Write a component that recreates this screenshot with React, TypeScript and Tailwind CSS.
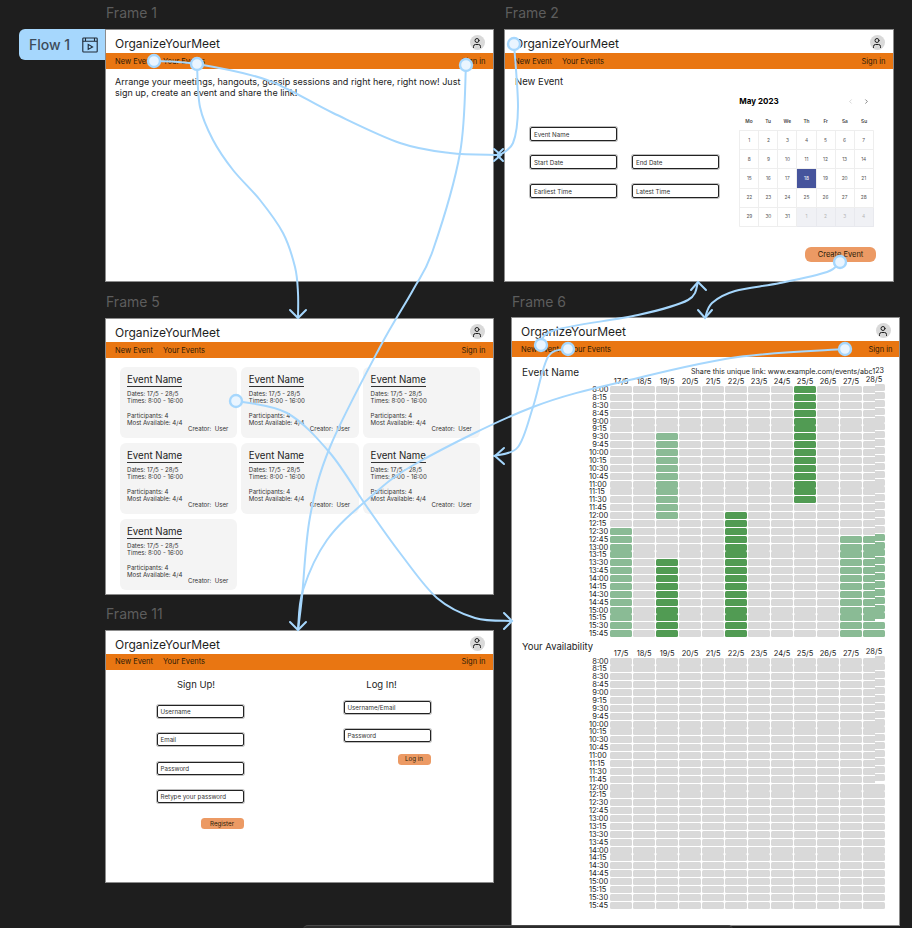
import { User, ChevronLeft, ChevronRight } from "lucide-react";
import type { ReactNode } from "react";

const dates = ["17/5", "18/5", "19/5", "20/5", "21/5", "22/5", "23/5", "24/5", "25/5", "26/5", "27/5", "28/5"];

const times: string[] = [];
for (let h = 8; h < 16; h++) {
  for (const m of ["00", "15", "30", "45"]) times.push(`${h}:${m}`);
}

// availability per column: [first row, last row, colour]
const LIGHT = "bg-[#8abb95]";
const DARK = "bg-[#519b53]";
const EMPTY = "bg-[#d9d9d9]";
const ranges: Record<number, [number, number, string][]> = {
  0: [[18, 31, LIGHT]],
  2: [
    [6, 16, LIGHT],
    [22, 31, DARK],
  ],
  5: [[16, 31, DARK]],
  8: [[0, 14, DARK]],
  10: [[19, 31, LIGHT]],
  11: [[19, 31, LIGHT]],
};

function cellColour(col: number, row: number) {
  const found = ranges[col]?.find(([a, b]) => row >= a && row <= b);
  return found ? found[2] : EMPTY;
}

function Header({ wide }: { wide?: boolean }) {
  return (
    <>
      <div className="flex h-[23px] items-start justify-between pl-[9px] pr-[8.5px]">
        <span className="mt-[6px] text-[12px] leading-[16px] text-[#1e1e1e]">OrganizeYourMeet</span>
        <span className="mt-[5px] flex h-[15px] w-[15px] items-center justify-center rounded-full bg-[#d9d9d9]">
          <User size={12} strokeWidth={2} className="text-[#1e1e1e]" />
        </span>
      </div>
      <div
        className={`flex h-[16px] items-center gap-[10px] bg-[#e97612] pl-[9px] pt-[1px] text-[7.5px] text-[#2a1a08] ${
          wide ? "pr-[6.5px]" : "pr-[7.5px]"
        }`}
      >
        <span>New Event</span>
        <span>Your Events</span>
        <span className="ml-auto">Sign in</span>
      </div>
    </>
  );
}

function Frame({ className, children }: { className: string; children: ReactNode }) {
  return (
    <div className={`absolute overflow-hidden bg-white outline outline-1 outline-[#8c8c8c] ${className}`}>
      {children}
    </div>
  );
}

function Label({ className, text }: { className: string; text: string }) {
  return <span className={`absolute text-[14px] leading-[17px] text-[#5d5d5d] ${className}`}>{text}</span>;
}

function Field({ text, className = "" }: { text: string; className?: string }) {
  return (
    <div
      className={`flex h-[13.5px] w-[87px] items-center rounded-[2px] border border-[#222] pl-[3px] pt-[1px] text-[6.2px] text-[#333] shadow-[0_0_0_1px_rgba(0,0,0,0.25)] ${className}`}
    >
      {text}
    </div>
  );
}

function Calendar() {
  const cells = [...Array(31).keys()].map((n) => n + 1);
  return (
    <div className="mr-[2.3px] mt-[27px] w-[134.4px]">
      <div className="flex h-[10px] items-center text-[8px] font-bold text-black">
        <span>May 2023</span>
        <ChevronLeft size={7} className="ml-auto text-[#bbb]" />
        <ChevronRight size={7} className="ml-[9px] mr-[4px] text-[#333]" />
      </div>
      <div className="mt-[11px] grid grid-cols-7 text-center text-[4.8px] font-semibold leading-[8px] text-[#444]">
        {["Mo", "Tu", "We", "Th", "Fr", "Sa", "Su"].map((d) => (
          <span key={d}>{d}</span>
        ))}
      </div>
      <div className="mt-[5px] grid grid-cols-7 overflow-hidden rounded-[1px] border-l border-t border-[#eeeeee] text-[4.8px]">
        {cells.map((n) => (
          <div
            key={n}
            className={`flex h-[19.2px] items-center justify-center border-b border-r border-[#eeeeee] ${
              n === 18 ? "bg-[#46549c] text-white" : "text-[#555]"
            }`}
          >
            {n}
          </div>
        ))}
        {[1, 2, 3, 4].map((n) => (
          <div
            key={n}
            className="flex h-[19.2px] items-center justify-center border-b border-r border-[#e8e9ee] bg-[#f0f1f5] text-[#b5b5b5]"
          >
            {n}
          </div>
        ))}
      </div>
    </div>
  );
}

function EventCard() {
  return (
    <div className="flex h-[71px] flex-col rounded-[6px] bg-[#f4f4f4] pl-[7.5px] pr-[8.5px] pt-[6px] text-[6.1px] leading-[7.3px] text-[#333]">
      <span className="self-start border-b border-[#333] text-[9.7px] leading-[13px] text-[#222]">Event Name</span>
      <span className="mt-[3px]">Dates: 17/5 - 28/5</span>
      <span>Times: 8:00 - 16:00</span>
      <span className="mt-[7.3px]">Participants: 4</span>
      <span>Most Available: 4/4</span>
      <span className="-mt-[1.5px] self-end">Creator:&nbsp; User</span>
    </div>
  );
}

function Heatmap({ className, shifted, filled }: { className: string; shifted: number; filled?: boolean }) {
  return (
    <div className={`grid grid-cols-[87px_repeat(12,21.7px)] gap-x-[1.3px] ${className}`}>
      <span className="h-[9px]" />
      {dates.map((d, i) => (
        <span
          key={d}
          className={`text-center text-[7.5px] leading-[9px] text-[#222] ${i === 11 ? "-translate-y-[2px]" : ""}`}
        >
          {d}
        </span>
      ))}
      {times.map((t, row) => (
        <div key={t} className="col-span-13 grid grid-cols-[87px_repeat(12,21.7px)] gap-x-[1.3px] pb-[0.88px]">
          <span className={`text-[7.5px] leading-[7px] text-[#222] ${t.length === 4 ? "pl-[70.3px]" : "pl-[67px]"}`}>
            {t}
          </span>
          {dates.map((d, col) => {
            const colour = filled ? cellColour(col, row) : EMPTY;
            // the right end of the last column sits a little higher in the mockup
            if (col === 11 && row < shifted) {
              return (
                <span key={d} className="flex h-[7px]">
                  <span className={`flex-1 rounded-l-[1.5px] ${colour}`} />
                  <span className={`w-[10px] -translate-y-[2px] rounded-r-[1.5px] ${colour}`} />
                </span>
              );
            }
            return <span key={d} className={`h-[7px] rounded-[1.5px] ${colour}`} />;
          })}
        </div>
      ))}
    </div>
  );
}

// smooth curve through the points (catmull-rom)
function curve(p: number[][]) {
  let d = `M${p[0][0]} ${p[0][1]}`;
  for (let i = 0; i < p.length - 1; i++) {
    const a = p[i - 1] ?? p[i];
    const b = p[i];
    const c = p[i + 1];
    const e = p[i + 2] ?? c;
    d += ` C${b[0] + (c[0] - a[0]) / 6} ${b[1] + (c[1] - a[1]) / 6} ${c[0] - (e[0] - b[0]) / 6} ${c[1] - (e[1] - b[1]) / 6} ${c[0]} ${c[1]}`;
  }
  return d;
}

const links: number[][][] = [
  [[154, 61], [197, 64], [267, 80], [333, 113], [400, 143], [450, 153], [497, 155]],
  [[197, 64], [200, 107], [213, 140], [233, 170], [260, 200], [283, 233], [295, 267], [298, 293], [298, 318]],
  [[466, 65], [460, 153], [433, 250], [413, 290], [380, 347], [330, 447], [310, 517], [302, 597], [298, 630]],
  [[514, 44], [518, 107], [513, 143], [498, 156]],
  [[840, 262], [827, 272], [780, 283], [735, 291], [712, 303], [705, 318]],
  [[540, 345], [555, 330], [638, 315], [688, 300], [698, 282]],
  [[568, 349], [548, 357], [533, 407], [518, 447], [494, 456]],
  [[845, 349], [738, 357], [638, 378], [533, 407], [417, 463], [367, 500], [327, 540], [303, 590], [298, 630]],
  [[236, 401], [287, 413], [330, 453], [367, 507], [400, 553], [437, 598], [475, 618], [512, 621]],
];

const dots = [[154, 61], [197, 64], [466, 65], [514, 44], [840, 262], [541, 345], [568, 349], [845, 349], [236, 401]];

const arrows: string[] = [
  "M290 310 L298 318 L306 310",
  "M290 622 L298 630 L306 622",
  "M698 310 L705 318 L712 310",
  "M691 290 L698 282 L706 290",
  "M504 448 L495 456 L504 464",
  "M504 613 L512 621 L504 629",
  "M494 149 L501 155 L494 161 M503 149 L497 155 L503 161",
];

function Connectors() {
  return (
    <svg className="pointer-events-none absolute inset-0" width={912} height={928} fill="none">
      <g stroke="#a6d7fd" strokeWidth={2} strokeLinecap="round">
        {links.map((p, i) => (
          <path key={i} d={curve(p)} />
        ))}
        {arrows.map((d) => (
          <path key={d} d={d} />
        ))}
      </g>
      {dots.map(([x, y]) => (
        <circle key={`${x}-${y}`} cx={x} cy={y} r={6} fill="#eaf5ff" stroke="#a6d7fd" strokeWidth={2.4} />
      ))}
    </svg>
  );
}

export default function App() {
  return (
    <div className="relative h-[928px] w-[912px] overflow-hidden bg-[#1e1e1e] [font-family:Inter,sans-serif]">
      <Label className="left-[106px] top-[4px]" text="Frame 1" />
      <Label className="left-[505px] top-[4px]" text="Frame 2" />
      <Label className="left-[106px] top-[293px]" text="Frame 5" />
      <Label className="left-[512px] top-[293px]" text="Frame 6" />
      <Label className="left-[106px] top-[605px]" text="Frame 11" />

      {/* flow tag */}
      <div className="absolute left-[19px] top-[29px] flex h-[31px] w-[87px] items-center rounded-l-[6px] bg-[#a6d7fd] pl-[10px] text-[14px] font-medium text-[#3d4c5a]">
        <span>Flow 1</span>
        <svg className="ml-[12px]" width={16} height={16} viewBox="0 0 16 16" fill="none" stroke="#1f2a36" strokeWidth={1.1}>
          <rect x={0.8} y={1} width={14.4} height={14} rx={0.8} />
          <path d="M0.8 4.2 H15.2 M3.5 1 V4.2 M12.5 1 V4.2" />
          <path d="M6.2 7.4 L10.6 10 L6.2 12.4 Z" />
        </svg>
      </div>

      <Frame className="left-[106px] top-[30px] h-[251px] w-[387px]">
        <Header />
        <p className="pl-[9px] pr-[25px] pt-[7px] text-[9px] leading-[11px] text-[#222]">
          Arrange your meetings, hangouts, gossip sessions and right here, right now! Just sign up, create an event and share the link!
        </p>
      </Frame>

      <Frame className="left-[505px] top-[30px] h-[251px] w-[388px]">
        <Header />
        <div className="flex flex-col pl-[10px] pr-[17px]">
          <div className="flex justify-between">
            <div>
              <p className="mt-[7px] text-[9.5px] leading-[12px] text-[#222]">New Event</p>
              <Field text="Event Name" className="ml-[15px] mt-[39px]" />
              <div className="ml-[15px] mt-[14.5px] grid grid-cols-[87px_87px] gap-x-[15px] gap-y-[15.5px]">
                <Field text="Start Date" />
                <Field text="End Date" />
                <Field text="Earliest Time" />
                <Field text="Latest Time" />
              </div>
            </div>
            <Calendar />
          </div>
          <button className="mt-[20px] h-[15px] w-[71px] self-end rounded-[6px] bg-[#ec9a64] text-[7.5px] text-[#2a1a08]">
            Create Event
          </button>
        </div>
      </Frame>

      <Frame className="left-[106px] top-[319px] h-[275px] w-[387px]">
        <Header />
        <div className="grid grid-cols-[117.3px_117.3px_117.3px] gap-x-[4.5px] gap-y-[5px] pl-[13.5px] pt-[9px]">
          {[0, 1, 2, 3, 4, 5, 6].map((i) => (
            <EventCard key={i} />
          ))}
        </div>
      </Frame>

      <Frame className="left-[512px] top-[318px] h-[607px] w-[387px]">
        <Header wide />
        <div className="flex items-start justify-between pl-[10px] pr-[15px] pt-[9px] text-[#222]">
          <span className="text-[10px] leading-[12px]">Event Name</span>
          <span className="mt-[1px] text-[7.2px] leading-[9px]">
            Share this unique link: www.example.com/events/abc1<span className="inline-block -translate-y-[1px]">23</span>
          </span>
        </div>
        <Heatmap className="ml-[10px] mt-[-1px]" shifted={30} filled />
        <p className="ml-[10px] mt-[3px] text-[9.5px] leading-[12px] text-[#222]">Your Availability</p>
        <Heatmap className="ml-[10px] mt-[-4.5px]" shifted={16} />
      </Frame>

      <Frame className="left-[106px] top-[630.5px] h-[251.5px] w-[387px]">
        <Header />
        <div className="flex">
          <div className="ml-[50.5px] flex w-[87px] flex-col">
            <p className="-ml-[8px] mt-[8px] text-center text-[9.5px] leading-[13px] text-[#222]">Sign Up!</p>
            <Field text="Username" className="mt-[14px]" />
            <Field text="Email" className="mt-[14.5px]" />
            <Field text="Password" className="mt-[15.5px]" />
            <Field text="Retype your password" className="mt-[14.5px]" />
            <button className="mt-[15px] h-[11px] w-[43px] self-end rounded-[3.5px] bg-[#ec9a64] text-[6.2px] text-[#2a1a08]">
              Register
            </button>
          </div>
          <div className="ml-[100px] flex w-[87px] flex-col">
            <p className="-ml-[11px] mt-[8px] text-center text-[9.5px] leading-[13px] text-[#222]">Log In!</p>
            <Field text="Username/Email" className="mt-[10px]" />
            <Field text="Password" className="mt-[14.5px]" />
            <button className="mt-[11.5px] h-[11px] w-[33px] self-end rounded-[3.5px] bg-[#ec9a64] text-[6.2px] text-[#2a1a08]">
              Log in
            </button>
          </div>
        </div>
      </Frame>

      <Connectors />

      {/* toolbar peeking in at the bottom edge */}
      <div className="absolute left-[303px] top-[925px] h-[10px] w-[430px] rounded-t-[5px] border-t border-[#4a4a4a] bg-[#2c2c2c]" />
    </div>
  );
}
